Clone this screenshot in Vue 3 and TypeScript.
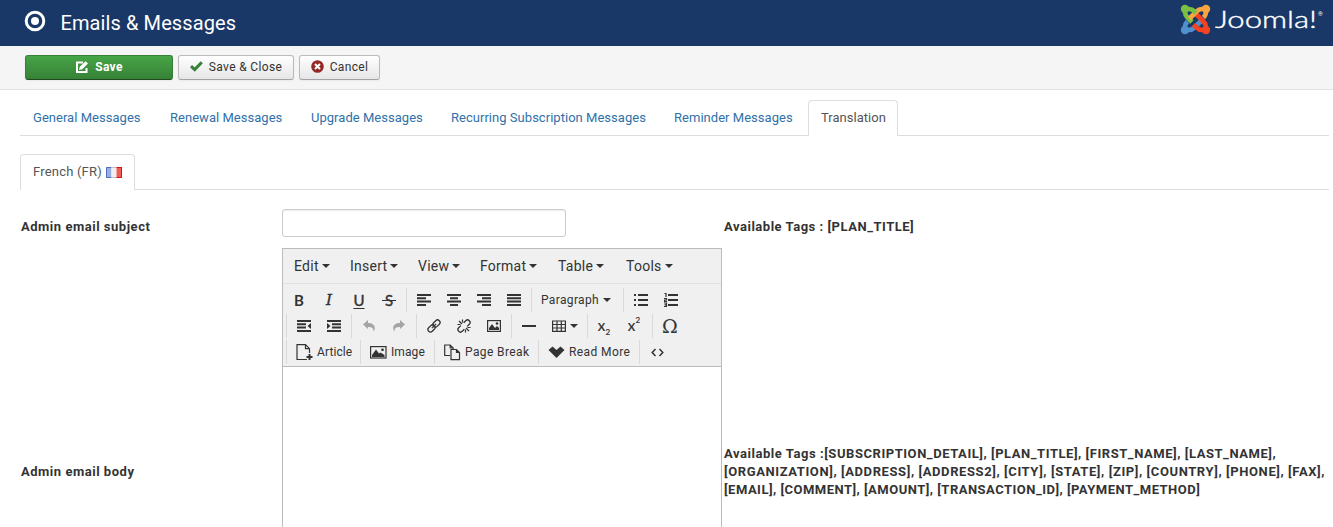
<script setup lang="ts">
interface Tab { label: string; width: number; active?: boolean }
const tabs: Tab[] = [
  { label: 'General Messages', width: 135 },
  { label: 'Renewal Messages', width: 139 },
  { label: 'Upgrade Messages', width: 138 },
  { label: 'Recurring Subscription Messages', width: 221 },
  { label: 'Reminder Messages', width: 145 },
  { label: 'Translation', width: 90, active: true },
]
const menus = [
  { label: 'Edit', width: 56 },
  { label: 'Insert', width: 68 },
  { label: 'View', width: 62 },
  { label: 'Format', width: 78 },
  { label: 'Table', width: 68 },
  { label: 'Tools', width: 60 },
]
const bodyTags = [
  'Available Tags :[SUBSCRIPTION_DETAIL], [PLAN_TITLE], [FIRST_NAME], [LAST_NAME],',
  '[ORGANIZATION], [ADDRESS], [ADDRESS2], [CITY], [STATE], [ZIP], [COUNTRY], [PHONE], [FAX],',
  '[EMAIL], [COMMENT], [AMOUNT], [TRANSACTION_ID], [PAYMENT_METHOD]',
]
</script>

<template>
  <div class="page">
    <header class="header">
      <svg class="target" width="22" height="22" viewBox="0 0 22 22">
        <circle cx="11" cy="11" r="8.8" fill="none" stroke="#fff" stroke-width="3" />
        <circle cx="11" cy="11" r="4" fill="#fff" />
      </svg>
      <h1>Emails &amp; Messages</h1>
      <svg class="logo" width="150" height="36" viewBox="0 0 150 36">
        <g fill="none" stroke-width="4.600" stroke-linejoin="round">
          <path d="M5 9V12Q5 15 7.500 17.500L12 22" stroke="#7ac143" />
          <path d="M5 30H9Q12 30 14.500 27.500L22.500 19.500" stroke="#5091cd" />
          <path d="M5 30V26.500Q5 24 7.500 21.500" stroke="#5091cd" />
          <path d="M26 30V27Q26 24 23.500 21.500L14.500 12.500" stroke="#f44321" />
          <path d="M26 30H22Q19 30 16.500 27.500L13.500 24.500" stroke="#f44321" />
          <path d="M26 9H22Q19 9 16.500 11.500L9.500 18.500" stroke="#f9a541" />
          <path d="M26 9V12Q26 15 23.500 17.500" stroke="#f9a541" />
          <path d="M5 9H9Q12 9 14.500 11.500L16 13" stroke="#7ac143" />
        </g>
        <circle cx="5" cy="9" r="4.200" fill="#7ac143" />
        <circle cx="26" cy="9" r="4.200" fill="#f9a541" />
        <circle cx="5" cy="30" r="4.200" fill="#5091cd" />
        <circle cx="26" cy="30" r="4.200" fill="#f44321" />
        <text x="35" y="28" class="wordmark" textLength="102" lengthAdjust="spacingAndGlyphs">Joomla!</text>
        <text x="138" y="15.500" class="reg">®</text>
      </svg>
    </header>

    <div class="subhead">
      <button class="btn save">
        <svg width="14" height="14" viewBox="0 0 14 14"><path d="M8 2.500H2V12H11.500V8" fill="none" stroke="#fff" stroke-width="2" /><path d="M4 10L4.800 6.800 10.500 1.200 13 3.600 7.300 9.300Z" fill="#fff" /></svg>
        <span>Save</span>
      </button>
      <button class="btn close">
        <svg width="13" height="12" viewBox="0 0 13 12"><path d="M1 5.200L4.700 8.600 11.800 1.200" fill="none" stroke="#378137" stroke-width="3" /></svg>
        <span>Save &amp; Close</span>
      </button>
      <button class="btn cancel">
        <svg width="13" height="13" viewBox="0 0 13 13"><circle cx="6.500" cy="6.500" r="6.300" fill="#942a25" /><path d="M4 4L9 9M9 4L4 9" stroke="#fff" stroke-width="2" /></svg>
        <span>Cancel</span>
      </button>
    </div>

    <main class="content">
      <nav class="tabs">
        <a v-for="t in tabs" :key="t.label" :class="{ active: t.active }" :style="{ width: t.width + 'px' }">{{ t.label }}</a>
      </nav>
      <nav class="tabs language">
        <a class="active">French (FR)
          <svg width="16" height="11" viewBox="0 0 16 11">
            <path d="M0 0h5.500v11H0z" fill="#97afe2" /><path d="M5.500 0h5v11h-5z" fill="#f0f0f0" /><path d="M10.500 0H16v11h-5.500z" fill="#f35d55" />
            <path d="M5.500 .5H.5v10h5" fill="none" stroke="#506db8" /><path d="M5.500 .5h5M5.500 10.500h5" stroke="#c4c4c4" /><path d="M10.500 .5h5v10h-5" fill="none" stroke="#cb1717" />
          </svg>
        </a>
      </nav>

      <div class="form">
        <label class="subject-label">Admin email subject</label>
        <div><input type="text" /></div>
        <p class="subject-tags">Available Tags : [PLAN_TITLE]</p>
        <label class="body-label">Admin email body</label>
        <div class="editor">
          <div class="menubar">
            <span v-for="m in menus" :key="m.label" :style="{ width: m.width + 'px' }">{{ m.label }}<i class="caret" /></span>
          </div>
          <div class="tools">
            <div class="row">
              <div class="group first">
                <b class="tool glyph bold">B</b><b class="tool glyph italic">I</b><b class="tool glyph underline">U</b><b class="tool glyph strike">S</b>
              </div>
              <div class="group w125">
                <span class="tool"><svg width="14" height="12"><path d="M0 1h14M0 4.300h9M0 7.600h14M0 11h9" /></svg></span>
                <span class="tool"><svg width="14" height="12"><path d="M0 1h14M3 4.300h8M0 7.600h14M3 11h8" /></svg></span>
                <span class="tool"><svg width="14" height="12"><path d="M0 1h14M5 4.300h9M0 7.600h14M5 11h9" /></svg></span>
                <span class="tool"><svg width="14" height="12"><path d="M0 1h14M0 4.300h14M0 7.600h14M0 11h14" /></svg></span>
              </div>
              <div class="group w92 para"><span>Paragraph</span><i class="caret" /></div>
              <div class="group">
                <span class="tool"><svg width="14" height="12"><path d="M4 1h10M4 6h10M4 11h10M0 1h2M0 6h2M0 11h2" /></svg></span>
                <span class="tool"><svg width="14" height="14" viewBox="0 0 14 14"><path d="M4 2h10M4 7h10M4 12h10" /><path class="thin" d="M.5 .5h1.500V4M0 5.500h2.500V7H.5v1.500H3M0 10h2.500v3.500H0M.5 11.800h2" /></svg></span>
              </div>
            </div>
            <div class="row">
              <div class="group w65">
                <span class="tool"><svg width="14" height="12"><path d="M0 1h14M0 4.300h9M0 7.600h9M0 11h14" /><path class="solid" d="M14 3v6L10.500 6z" /></svg></span>
                <span class="tool"><svg width="14" height="12"><path d="M0 1h14M5 4.300h9M5 7.600h9M0 11h14" /><path class="solid" d="M0 3v6L3.500 6z" /></svg></span>
              </div>
              <div class="group w65">
                <span class="tool"><svg width="12" height="12"><path class="faded" d="M0 4.500L5 0v3c6 0 8.500 4 5.500 9 .4-4-1.500-5.200-5.500-5V9z" /></svg></span>
                <span class="tool"><svg width="12" height="12"><path class="faded" d="M12 4.500L7 0v3c-6 0-8.500 4-5.500 9-.4-4 1.500-5.200 5.500-5V9z" /></svg></span>
              </div>
              <div class="group w95">
                <span class="tool"><svg width="14" height="14" viewBox="0 0 14 14"><g class="link" transform="rotate(-45 7 7)"><rect x="-.5" y="4.500" width="8" height="5" rx="2.500" /><rect x="6.500" y="4.500" width="8" height="5" rx="2.500" /><path d="M4 7h6" /></g></svg></span>
                <span class="tool"><svg width="14" height="14" viewBox="0 0 14 14"><g class="link" transform="rotate(-45 7 7)"><path d="M5 4.500H2a2.500 2.500 0 0 0 0 5h3M9 4.500h3a2.500 2.500 0 0 1 0 5H9" /></g><path class="thin" d="M2 2l3 3M5.500 .5v3M.5 5.500h3M12 12L9 9M8.500 13.500v-3M13.500 8.500h-3" /></svg></span>
                <span class="tool"><svg width="14" height="12"><rect class="thin" x=".6" y=".6" width="12.800" height="10.800" /><path class="solid" d="M2 10V8l3-4 3 4 2-2 2 2v2z" /><circle class="solid" cx="10" cy="3.500" r="1.300" /></svg></span>
              </div>
              <div class="group w76">
                <span class="tool"><svg width="14" height="12"><path d="M0 6h14" /></svg></span>
                <span class="tool table"><svg width="14" height="12"><path class="thin" d="M.6 1h12.800v10.400H.6zM0 4.500h14M0 8h14M5 1v11M9.300 1v11" /></svg><i class="caret" /></span>
              </div>
              <div class="group w65">
                <span class="tool script">x<sub>2</sub></span><span class="tool script">x<sup>2</sup></span>
              </div>
              <div class="group"><span class="tool omega">Ω</span></div>
            </div>
            <div class="row">
              <div class="group named w74"><svg width="17" height="17" viewBox="0 0 17 17"><path class="thin" d="M11 15.500H1V.7h8.500l4 4V9M9.500 .7v4h4" /><path d="M13.500 10v6M10.500 13h6" /></svg><span>Article</span></div>
              <div class="group named w74"><svg width="17" height="13" viewBox="0 0 17 13"><rect class="thin" x=".6" y=".6" width="15.400" height="11.400" /><path class="solid" d="M2 11V9l4-5.500 3 4 1.500-1 4 2.500v2z" /><circle class="solid" cx="12.500" cy="3.800" r="1.400" /></svg><span>Image</span></div>
              <div class="group named w104 wide"><svg width="17" height="17" viewBox="0 0 17 17"><path class="thin" d="M6 11.500H.7V1h5.500l3 3v1M6.200 1v3h3M7 5.500h5.500l3 3v7.200H7zM12.500 5.500v3h3" /></svg><span>Page Break</span></div>
              <div class="group named w101 wide"><svg width="17" height="12" viewBox="0 0 17 12"><path class="solid" d="M.5 4L4.500 .5l4 3.500 4-3.500L16.500 4l-8 8z" /></svg><span>Read More</span></div>
              <div class="group"><span class="tool"><svg width="13" height="9" viewBox="0 0 13 9"><path class="code" d="M4.500 1L1.200 4.500 4.500 8M8.500 1l3.300 3.500L8.500 8" /></svg></span></div>
            </div>
          </div>
        </div>
        <div class="body-tags"><div v-for="line in bodyTags" :key="line">{{ line }}</div></div>
      </div>
    </main>
  </div>
</template>

<style>
html, body { margin: 0; overflow: hidden; background: #fff; }
</style>
<style scoped>
.page { width: 1333px; height: 527px; overflow: hidden; font: 13px/18px Roboto, "Liberation Sans", sans-serif; color: #333; letter-spacing: .03px; }
.page * { box-sizing: border-box; }
.header { height: 46px; background: #1a3867; display: flex; align-items: flex-start; padding-left: 24px; }
.target { margin-top: 10px; }
h1 { margin: 9px 0 0 14.500px; font-size: 20px; line-height: 28px; font-weight: 400; color: #fff; letter-spacing: .1px; }
.logo { margin-left: auto; margin-right: 3px; }
.wordmark { font: 300 24px Lato, sans-serif; fill: #fff; stroke: #fff; stroke-width: .4; letter-spacing: 0; }
.reg { font: 6px Roboto, sans-serif; fill: #fff; letter-spacing: 0; }
.subhead { height: 44px; background: #f5f5f5; border-bottom: 1px solid #e3e3e3; display: flex; gap: 5px; padding: 9px 25px; }
.btn { height: 25px; display: flex; align-items: center; justify-content: center; padding: 0 0 2px; font: 12px/18px Roboto, sans-serif; letter-spacing: .35px; color: #333; border: 1px solid #bbb; border-bottom-color: #a2a2a2; border-radius: 3px; background: linear-gradient(#fff, #e6e6e6); box-shadow: 0 1px 2px rgba(0,0,0,.05); gap: 6px; }
.save { width: 148px; color: #fff; font-weight: 700; background: linear-gradient(#46a546, #378137); border-color: #378137 #378137 #204b20; }
.close { width: 116px; }
.cancel { width: 81px; }
.content { padding: 10px 4px 0 20px; }
.tabs { display: flex; height: 36px; border-bottom: 1px solid #ddd; gap: 2px; }
.tabs a { height: 36px; padding: 8px 0 0 12px; border: 1px solid transparent; border-bottom: 0; border-radius: 4px 4px 0 0; color: #3071a9; white-space: nowrap; }
.tabs a.active { color: #555; background: #fff; border-color: #ddd; }
.language { margin-top: 18px; }
.language a { width: 115px; letter-spacing: .2px; }
.language svg { vertical-align: -2px; margin-left: 1px; }
.form { display: grid; grid-template-columns: 262px 440px 1fr; grid-template-rows: 58px 280px; font-weight: 700; letter-spacing: .52px; }
.subject-label { padding: 28px 0 0 1px; }
.body-label { padding: 215px 0 0 1px; }
input { display: block; width: 284px; height: 28px; margin-top: 19px; border: 1px solid #ccc; border-radius: 3px; box-shadow: inset 0 1px 1px rgba(0,0,0,.075); background: #fff; }
p { margin: 0; padding: 28px 0 0 2px; }
.body-tags { padding: 197px 0 0 2px; white-space: nowrap; letter-spacing: .55px; }
.body-tags div:nth-child(2) { letter-spacing: .6px; }
.body-tags div:nth-child(3) { letter-spacing: .49px; }
.editor { height: 300px; border: 1px solid #bbb; font-weight: 400; letter-spacing: .1px; }
.menubar { height: 35px; padding-left: 11px; display: flex; background: #f0f0f0; border-bottom: 1px solid #e2e2e2; font-size: 14px; line-height: 34px; letter-spacing: .25px; }
.caret { display: inline-block; border: 4px solid transparent; border-top-color: #333; border-bottom: 0; margin-left: 3px; vertical-align: 3px; }
.tools { height: 83px; background: #f0f0f0; border-bottom: 1px solid #bbb; padding: 4px 0 0 3px; display: flex; flex-direction: column; gap: 2px; }
.row { height: 24px; display: flex; font-size: 12px; }
.group { height: 24px; border-left: 1px solid #d9d9d9; padding-left: 2px; display: flex; align-items: center; flex-shrink: 0; }
.first { width: 122px; border: 0; padding: 0; margin-left: -2px; }
.w65 { width: 65px; } .w74 { width: 74px; } .w76 { width: 76px; } .w92 { width: 92px; } .w95 { width: 95px; } .w101 { width: 101px; } .w104 { width: 104px; } .w125 { width: 125px; }
.tool { width: 30px; height: 24px; display: flex; align-items: center; justify-content: center; flex-shrink: 0; }
.tool path, .named path { stroke: #333; stroke-width: 2; fill: none; }
.tool .thin, .named .thin { stroke: #333; stroke-width: 1.200; fill: none; }
.solid { fill: #333 !important; stroke: none !important; }
.tool .faded { fill: #a5a5a5; stroke: none; }
.link rect, .tool .link path { fill: none; stroke: #333; stroke-width: 1.300; }
.tool .code { stroke-width: 1.500; }
.glyph { font: 700 15px Lato, sans-serif; }
.italic { font: italic 400 15px "DejaVu Serif", serif; -webkit-text-stroke: .4px #333; }
.underline { font-weight: 400; -webkit-text-stroke: .4px #333; text-decoration: underline; text-underline-offset: 2px; padding-bottom: 1px; }
.strike { font-weight: 400; -webkit-text-stroke: .4px #333; background: linear-gradient(#333, #333) center 12px / 14px 1px no-repeat; }
.para { padding-left: 9px; }
.para span { letter-spacing: .35px; }
.para .caret { margin-left: 4px; }
.table { width: 42px; gap: 2px; }
.table .caret { margin-left: 2px; }
.script { font: 15px Lato, sans-serif; padding: 0 2px 2px 0; -webkit-text-stroke: .2px #333; }
.script sub, .script sup { font-size: 8px; line-height: 8px; align-self: flex-end; margin-bottom: 0; }
.script sup { align-self: flex-start; margin: 2px 0 0; }
.omega { font: 19px "DejaVu Serif", serif; }
.named { padding-left: 9px; gap: 4px; }
.wide { letter-spacing: .4px; }
</style>
